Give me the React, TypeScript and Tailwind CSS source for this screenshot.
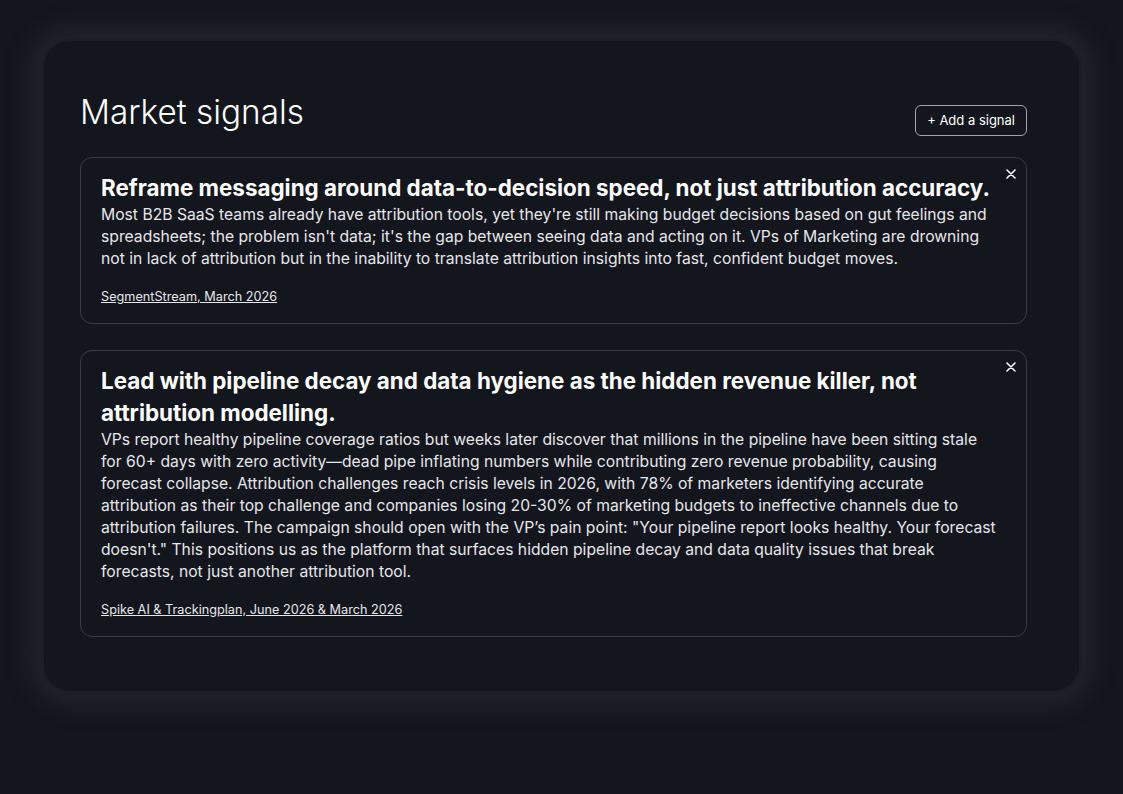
import React from "react";

interface Signal {
  id: number;
  title: string;
  body: string;
  source: string;
}

const signals: Signal[] = [
  {
    id: 1,
    title: "Reframe messaging around data-to-decision speed, not just attribution accuracy.",
    body: "Most B2B SaaS teams already have attribution tools, yet they're still making budget decisions based on gut feelings and spreadsheets; the problem isn't data; it's the gap between seeing data and acting on it. VPs of Marketing are drowning not in lack of attribution but in the inability to translate attribution insights into fast, confident budget moves.",
    source: "SegmentStream, March 2026",
  },
  {
    id: 2,
    title: "Lead with pipeline decay and data hygiene as the hidden revenue killer, not attribution modelling.",
    body: "VPs report healthy pipeline coverage ratios but weeks later discover that millions in the pipeline have been sitting stale for 60+ days with zero activity\u2014dead pipe inflating numbers while contributing zero revenue probability, causing forecast collapse. Attribution challenges reach crisis levels in 2026, with 78% of marketers identifying accurate attribution as their top challenge and companies losing 20-30% of marketing budgets to ineffective channels due to attribution failures. The campaign should open with the VP\u2019s pain point: \"Your pipeline report looks healthy. Your forecast doesn't.\" This positions us as the platform that surfaces hidden pipeline decay and data quality issues that break forecasts, not just another attribution tool.",
    source: "Spike AI & Trackingplan, June 2026 & March 2026",
  },
];

function CloseIcon() {
  return (
    <svg width="10" height="10" viewBox="0 0 10 10" fill="none">
      <path d="M1 1L9 9M9 1L1 9" stroke="white" strokeWidth="1.6" strokeLinecap="round" />
    </svg>
  );
}

function SignalCard({ signal }: { signal: Signal }) {
  return (
    <div className="relative rounded-xl border border-[#393c44] pl-5 pr-[26px] pt-[14px] pb-[17px]">
      <button className="absolute top-[10px] right-[9px] p-[1px]">
        <CloseIcon />
      </button>
      <h2 className="text-[22.4px] leading-8 font-bold text-white">{signal.title}</h2>
      <p className="text-[15.7px] leading-[22px] text-[#e6e7ea]">{signal.body}</p>
      <a className="mt-[18px] block text-[12.7px] leading-[18px] text-[#e6e7ea] underline">
        {signal.source}
      </a>
    </div>
  );
}

export default function App() {
  return (
    <div
      className="min-h-screen bg-[#14161d] pt-[41px]"
      style={{ fontFamily: "Inter, 'Noto Sans', sans-serif" }}
    >
      <div className="mx-auto w-[1035px] rounded-[26px] bg-[#14161d] pl-9 pr-[52px] pt-[51px] pb-[54px] shadow-[0_0_0_3px_#1c1e25,0_0_28px_10px_rgba(70,74,86,0.35)]">
        <div className="mb-[21px] flex items-start justify-between">
          <h1 className="text-[33.3px] leading-10 font-light text-white">Market signals</h1>
          <button className="mt-[13px] rounded-md border border-[#a3a6ad] px-[11px] py-[5px] text-[13px] leading-[19px] text-white">
            + Add a signal
          </button>
        </div>
        <div className="flex flex-col gap-[26px]">
          {signals.map((s) => (
            <SignalCard key={s.id} signal={s} />
          ))}
        </div>
      </div>
    </div>
  );
}
